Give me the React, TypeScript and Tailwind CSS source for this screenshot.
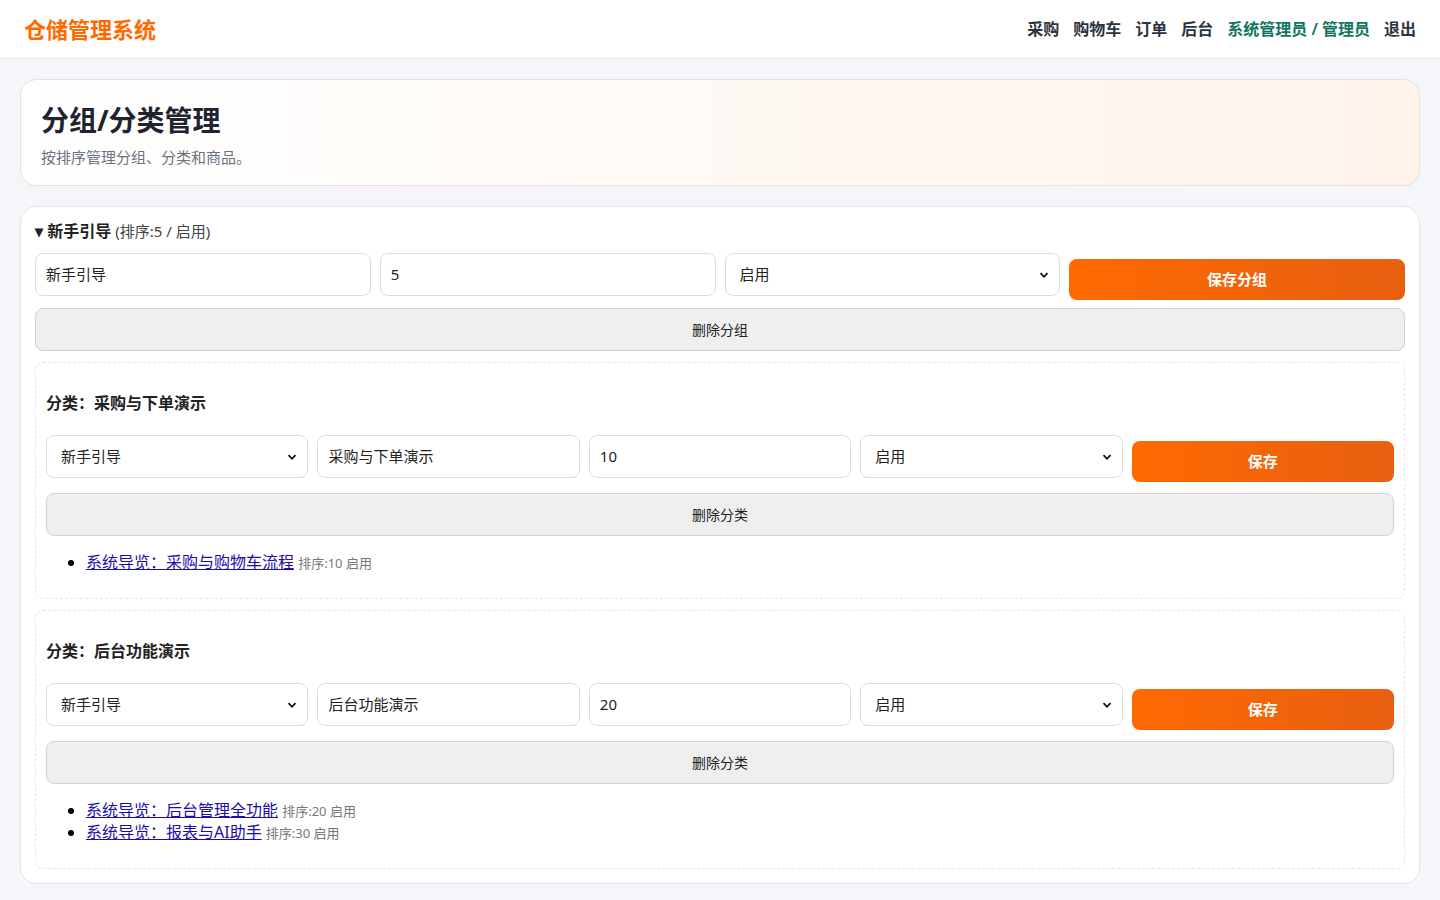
import * as React from "react";

const font = { fontFamily: '"Noto Sans", "Noto Sans CJK SC", sans-serif' };

function Select({ value }: { value: string }) {
  return (
    <div className="relative flex h-[43px] items-center rounded-lg border border-[#d8dce3] bg-white px-3.5 text-[15px] text-[#222]">
      {value}
      <svg className="absolute right-2.5 top-1/2 -translate-y-1/2" width="10" height="10" viewBox="0 0 10 10">
        <path d="M1.5 3.2 5 6.8 8.5 3.2" fill="none" stroke="#111" strokeWidth="1.8" />
      </svg>
    </div>
  );
}

function Input({ value }: { value: string }) {
  return (
    <div className="flex h-[43px] items-center rounded-lg border border-[#d8dce3] bg-white px-2.5 text-[15px] text-[#222]">
      {value}
    </div>
  );
}

function SaveBtn({ label }: { label: string }) {
  return (
    <button className="mt-1.5 h-[41px] rounded-lg bg-gradient-to-r from-[#ff6a00] to-[#e85f10] text-[15px] font-bold text-white">
      {label}
    </button>
  );
}

function DelBtn({ label }: { label: string }) {
  return (
    <button className="h-[43px] w-full rounded-lg border border-[#cfd3d8] bg-[#efefef] text-sm text-[#222]">
      {label}
    </button>
  );
}

function Category({ name, sort, items }: { name: string; sort: string; items: [string, string][] }) {
  return (
    <div className="rounded-lg border border-dashed border-[#e3e6ea] px-2.5 pb-6 pt-[28px]">
      <div className="text-base font-bold text-[#222]">分类：{name}</div>
      <div className="mt-5 grid grid-cols-5 gap-[9px]">
        <Select value="新手引导" />
        <Input value={name} />
        <Input value={sort} />
        <Select value="启用" />
        <SaveBtn label="保存" />
      </div>
      <div className="mt-[11px]">
        <DelBtn label="删除分类" />
      </div>
      <ul className="mt-[16px] list-disc pl-10 text-base leading-[21px]">
        {items.map(([t, m]) => (
          <li key={t}>
            <a className="text-[#1a0dab] underline" href="#">
              {t}
            </a>{" "}
            <span className="text-[13px] text-[#777]">{m}</span>
          </li>
        ))}
      </ul>
    </div>
  );
}

export default function App() {
  return (
    <div className="min-h-[900px] bg-[#f4f6fa]" style={font}>
      <header className="flex h-[59px] items-center justify-between border-b border-[#e3e6ea] bg-white px-6">
        <div className="text-[22px] font-bold text-[#ff6a00]">仓储管理系统</div>
        <nav className="flex items-center gap-3.5 text-base font-semibold text-[#2b3440]">
          <span>采购</span>
          <span>购物车</span>
          <span>订单</span>
          <span>后台</span>
          <span className="text-[#11765f]">系统管理员 / 管理员</span>
          <span>退出</span>
        </nav>
      </header>
      <main className="flex flex-col gap-5 px-5 pt-5">
        <section className="h-[107px] rounded-2xl border border-[#f0dfd4] bg-gradient-to-r from-white to-[#fff3ea] px-5 pt-5">
          <h1 className="text-[28px] font-bold leading-[40px] text-[#1f2430]">分组/分类管理</h1>
          <p className="mt-1.5 text-[15px] text-[#6b7280]">按排序管理分组、分类和商品。</p>
        </section>
        <section className="rounded-2xl border border-[#e3e6ea] bg-white px-3.5 pb-3.5 pt-3">
          <div className="text-base font-semibold text-[#222]">
            ▾ 新手引导 <span className="text-[15px] font-normal text-[#444]">(排序:5 / 启用)</span>
          </div>
          <div className="mt-2.5 grid grid-cols-4 gap-[9px]">
            <Input value="新手引导" />
            <Input value="5" />
            <Select value="启用" />
            <SaveBtn label="保存分组" />
          </div>
          <div className="mt-2">
            <DelBtn label="删除分组" />
          </div>
          <div className="mt-[11px] flex flex-col gap-[11px]">
            <Category name="采购与下单演示" sort="10" items={[["系统导览：采购与购物车流程", "排序:10 启用"]]} />
            <Category
              name="后台功能演示"
              sort="20"
              items={[
                ["系统导览：后台管理全功能", "排序:20 启用"],
                ["系统导览：报表与AI助手", "排序:30 启用"],
              ]}
            />
          </div>
        </section>
        <section className="h-20 rounded-2xl border border-[#e3e6ea] bg-white" />
      </main>
    </div>
  );
}
